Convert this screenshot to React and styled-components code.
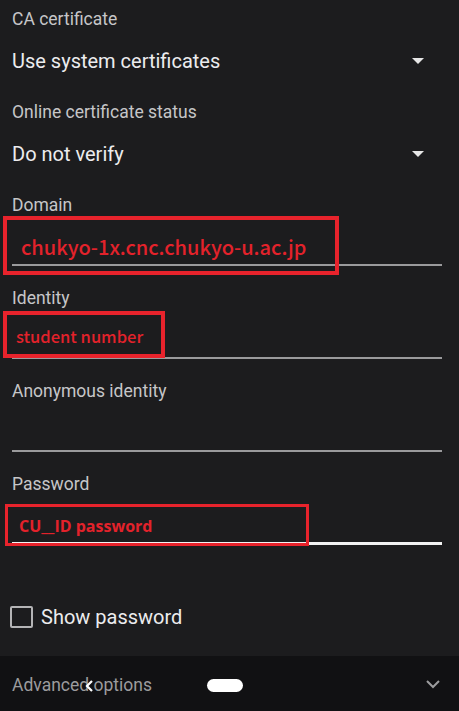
import React from 'react';
import styled, { createGlobalStyle } from 'styled-components';

const GlobalStyle = createGlobalStyle`
  html, body {
    margin: 0;
    padding: 0;
    background: #1c1c1e;
  }
  body {
    font-family: Roboto, "Noto Sans", sans-serif;
  }
`;

const Screen = styled.div`
  width: 459px;
  height: 711px;
  display: flex;
  flex-direction: column;
  background: #1c1c1e;
  overflow: hidden;
`;

const Form = styled.div`
  flex: 1;
  padding: 7px 17px 0 12px;
  display: flex;
  flex-direction: column;
`;

const Label = styled.div`
  font-size: 17.5px;
  line-height: 24px;
  color: #c6c6c8;
`;

const SelectBlock = styled.div`
  padding-bottom: 17px;
`;

const SelectValue = styled.div`
  margin-top: 8px;
  height: 44px;
  display: flex;
  align-items: center;
  justify-content: space-between;
  font-size: 20px;
  color: #ececee;
  padding-right: 18px;
`;

const Caret = styled.span`
  width: 0;
  height: 0;
  border-left: 6px solid transparent;
  border-right: 6px solid transparent;
  border-top: 6px solid #e6e6e6;
`;

const TextBlock = styled.div`
  position: relative;
  padding-bottom: ${p => (p.$last ? 0 : 20)}px;
`;

const InputArea = styled.div`
  height: 49px;
  box-sizing: border-box;
  padding-top: ${p => p.$offset}px;
  border-bottom: ${p => (p.$focused ? '3px solid #f2f2f2' : '2px solid #9a9a9c')};
`;

const RedValue = styled.div`
  font-family: ${p => (p.$bold ? '"Open Sans", sans-serif' : '"Noto Sans CJK JP", sans-serif')};
  font-weight: ${p => (p.$bold ? 700 : 500)};
  font-size: ${p => p.$size}px;
  line-height: 24px;
  color: #e3222b;
  padding-left: ${p => p.$indent}px;
  white-space: nowrap;
`;

const Annotation = styled.div`
  position: absolute;
  box-sizing: border-box;
  border: ${p => p.$weight}px solid #e8232c;
  pointer-events: none;
`;

const CheckRow = styled.div`
  margin-top: 60px;
  margin-left: -2px;
  display: flex;
  align-items: center;
  gap: 8px;
`;

const CheckBox = styled.span`
  width: 23px;
  height: 22px;
  box-sizing: border-box;
  border: 2px solid #b4b4b6;
  border-radius: 2px;
`;

const CheckLabel = styled.span`
  font-size: 20px;
  color: #ececee;
`;

const NavBar = styled.div`
  position: relative;
  height: 55px;
  background: #111113;
  display: flex;
  align-items: center;
  justify-content: space-between;
  padding: 0 18px 0 12px;
`;

const NavText = styled.span`
  font-size: 17.5px;
  color: #9c9c9e;
  margin-top: 3px;
`;

const BackGlyph = styled.svg`
  position: absolute;
  left: 85px;
  top: 24px;
`;

const HomePill = styled.span`
  position: absolute;
  left: 207px;
  top: 23px;
  width: 36px;
  height: 13px;
  border-radius: 7px;
  background: #ffffff;
`;

const Select = ({ label, value }) => (
  <SelectBlock>
    <Label>{label}</Label>
    <SelectValue>
      <span>{value}</span>
      <Caret />
    </SelectValue>
  </SelectBlock>
);

export default function App() {
  return (
    <Screen>
      <GlobalStyle />
      <Form>
        <Select label="CA certificate" value="Use system certificates" />
        <Select label="Online certificate status" value="Do not verify" />

        <TextBlock>
          <Label>Domain</Label>
          <InputArea $offset={18}>
            <RedValue $size={20} $indent={9}>chukyo-1x.cnc.chukyo-u.ac.jp</RedValue>
          </InputArea>
          <Annotation $weight={4} style={{ left: -9, top: 23, width: 336, height: 59 }} />
        </TextBlock>

        <TextBlock>
          <Label>Identity</Label>
          <InputArea $offset={14}>
            <RedValue $size={16.5} $indent={4}>student number</RedValue>
          </InputArea>
          <Annotation $weight={4} style={{ left: -9, top: 25, width: 162, height: 47 }} />
        </TextBlock>

        <TextBlock>
          <Label>Anonymous identity</Label>
          <InputArea $offset={16} />
        </TextBlock>

        <TextBlock $last>
          <Label>Password</Label>
          <InputArea $offset={18} $focused>
            <RedValue $size={16} $bold $indent={7}>CU__ID password</RedValue>
          </InputArea>
          <Annotation $weight={3} style={{ left: -7, top: 32, width: 304, height: 42 }} />
        </TextBlock>

        <CheckRow>
          <CheckBox />
          <CheckLabel>Show password</CheckLabel>
        </CheckRow>
      </Form>

      <NavBar>
        <NavText>Advanced options</NavText>
        <svg width="16" height="10" viewBox="0 0 16 10">
          <path d="M2 2 L8 8 L14 2" fill="none" stroke="#9c9c9e" strokeWidth="2" />
        </svg>
        <BackGlyph width="9" height="12" viewBox="0 0 9 12">
          <path d="M7 1 L2 6 L7 11" fill="none" stroke="#ffffff" strokeWidth="2.2" />
        </BackGlyph>
        <HomePill />
      </NavBar>
    </Screen>
  );
}
